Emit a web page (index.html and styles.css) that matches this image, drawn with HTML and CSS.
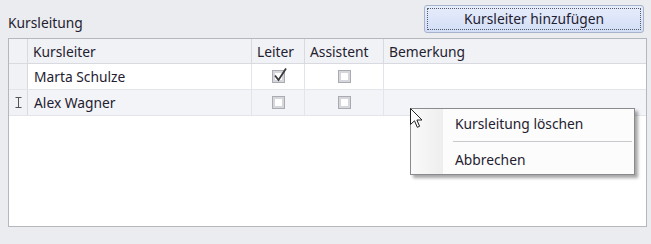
FILE: index.html
```html
<!DOCTYPE html>
<html>
<head>
<meta charset="utf-8">
<link rel="stylesheet" href="styles.css">
</head>
<body>
<div class="page">
  <div class="topbar">
    <span class="title">Kursleitung</span>
    <button class="btn"><span class="focus">Kursleiter hinzufügen</span></button>
  </div>
  <div class="grid">
    <div class="row head">
      <div class="c ind"></div>
      <div class="c name">Kursleiter</div>
      <div class="c leiter">Leiter</div>
      <div class="c assist">Assistent</div>
      <div class="c note">Bemerkung</div>
    </div>
    <div class="row">
      <div class="c ind"></div>
      <div class="c name">Marta Schulze</div>
      <div class="c leiter center"><span class="cb"><svg class="check" width="16" height="16" viewBox="0 0 16 16"><path d="M3 8.5 L6.5 13 L14 1.5" fill="none" stroke="#3a3a3a" stroke-width="1.8"/></svg></span></div>
      <div class="c assist center"><span class="cb"></span></div>
      <div class="c note"></div>
    </div>
    <div class="row focused">
      <div class="c ind"><svg width="7" height="11" viewBox="0 0 7 11"><path d="M0.5 0.5h6M0.5 10.5h6M3.5 0.5v10" stroke="#555" stroke-width="1" fill="none"/></svg></div>
      <div class="c name">Alex Wagner</div>
      <div class="c leiter center"><span class="cb"></span></div>
      <div class="c assist center"><span class="cb"></span></div>
      <div class="c note"></div>
    </div>
  </div>
  <div class="menu">
    <div class="strip"></div>
    <div class="items">
      <div class="item">Kursleitung löschen</div>
      <div class="sep"></div>
      <div class="item">Abbrechen</div>
    </div>
  </div>
  <svg class="cursor" width="13" height="21" viewBox="0 0 13 21"><path d="M0.5 0.5 V16.5 L4.5 12.8 L7.3 19.3 L9.6 18.3 L6.9 12 H12 Z" fill="#fff" stroke="#222" stroke-width="1"/></svg>
</div>
</body>
</html>
```
FILE: styles.css
```css
html, body { margin: 0; padding: 0; }
body {
  background: #ebecef;
  font-family: "Noto Sans", "Open Sans", sans-serif;
  font-size: 13.8px;
  color: #1f2130;
  width: 651px;
  height: 244px;
  overflow: hidden;
}
.page { position: relative; width: 651px; height: 244px; }
.topbar {
  display: flex;
  justify-content: space-between;
  align-items: center;
  height: 33px;
  padding: 5px 7px 0 8px;
  box-sizing: border-box;
  margin-bottom: 5px;
}
.title { padding-top: 6px; }
.btn {
  width: 220px;
  height: 28px;
  padding: 2px;
  border: 1px solid #a7b3cc;
  border-radius: 3px;
  background: linear-gradient(#e6edfb, #d3def6);
  font: inherit;
  color: #1f2130;
  box-sizing: border-box;
}
.focus {
  display: block;
  height: 22px;
  line-height: 20px;
  border: 1px dotted #555a66;
  box-sizing: border-box;
}
.grid {
  margin-left: 8px;
  width: 639px;
  height: 189px;
  box-sizing: border-box;
  border: 1px solid #b4b7bd;
  background: #fff;
}
.row {
  display: grid;
  grid-template-columns: 19px 224px 53px 79px 1fr;
  height: 26px;
  border-bottom: 1px solid #e3e5ea;
  box-sizing: border-box;
}
.row.head { height: 25px; background: #f1f2f5; border-bottom-color: #d8dae0; }
.row.focused { background: #f3f4f7; }
.c {
  border-right: 1px solid #e3e5ea;
  padding-left: 6px;
  display: flex;
  align-items: center;
  white-space: nowrap;
}
.head .c { border-right-color: #d8dae0; padding-left: 5px; }
.c.note { border-right: none; }
.c.ind { background: #f1f2f5; padding-left: 0; justify-content: center; border-right-color: #d8dae0; }
.c.center { justify-content: center; padding-left: 0; }
.cb {
  position: relative;
  width: 13px;
  height: 13px;
  box-sizing: border-box;
  border: 1px solid #a9abb0;
  background: #fff;
  box-shadow: inset 0 0 0 2px #d5d7dc;
}
.check { position: absolute; left: -1px; top: -4px; }
.menu {
  position: absolute;
  left: 410px;
  top: 108px;
  width: 225px;
  height: 67px;
  box-sizing: border-box;
  border: 1px solid #8a8b8e;
  background: #fcfcfc;
  box-shadow: 3px 3px 3px rgba(0,0,0,0.35);
  display: flex;
}
.strip { width: 32px; background: linear-gradient(90deg, #fafafa, #eeeeef); }
.items { flex: 1; padding-top: 1px; }
.item { height: 28px; line-height: 28px; padding-left: 12px; }
.sep { height: 1px; background: #c8c9cc; margin: 3px 2px 4px 10px; }
.cursor { position: absolute; left: 410px; top: 108px; }
```
